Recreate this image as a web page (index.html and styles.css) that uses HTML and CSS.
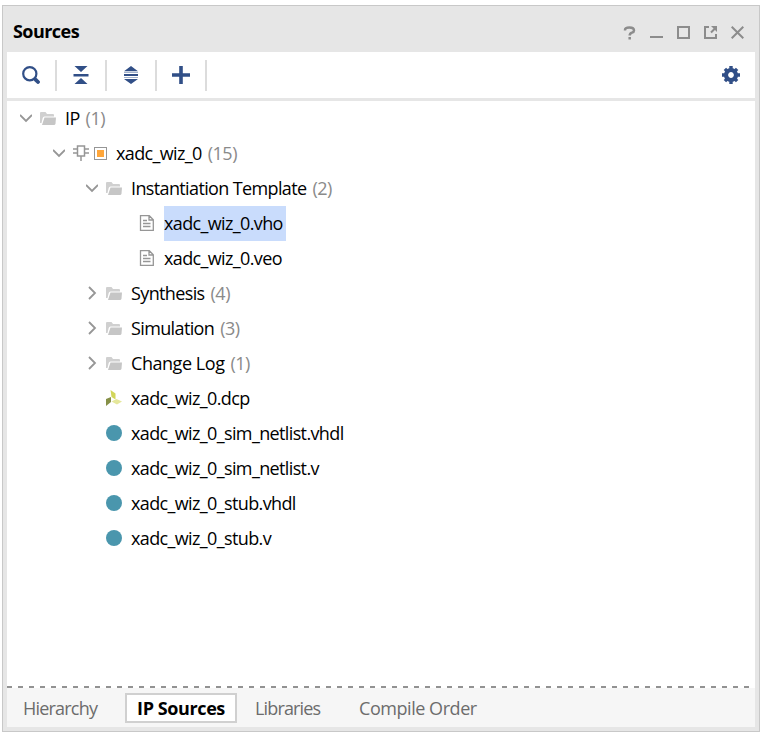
FILE: index.html
```html
<!DOCTYPE html>
<html lang="en">
<head>
<meta charset="utf-8">
<title>Sources</title>
<link rel="stylesheet" href="styles.css">
</head>
<body>
<svg width="0" height="0" class="defs">
  <symbol id="down" viewBox="0 0 12 16"><path d="M0 5l6 6 6-6" fill="none" stroke="#969696" stroke-width="1.800"/></symbol>
  <symbol id="right" viewBox="0 0 12 16"><path d="M3 2l6 6-6 6" fill="none" stroke="#969696" stroke-width="1.800"/></symbol>
  <symbol id="folder" viewBox="0 0 16 16"><path d="M0 13V3Q0 2 1 2h4.500L7 4h6q1 0 1 1v1.500H4.500Q3 6.500 2.700 8L1.500 13z" fill="#d0d0d0"/><path d="M4.500 7.500H16l-.5 6q-.2 1.500-1.500 1.500H2z" fill="#c6c6c6"/></symbol>
  <symbol id="doc" viewBox="0 0 16 16"><path d="M1.500.700h8.800l4 4v10.600H1.500zM10 .7v4.300h4.300M4 5.500h4M4 8.500h7.500M4 11.500h7.500" fill="none" stroke="#969696" stroke-width="1.300"/></symbol>
</svg>
<main class="panel">
  <header class="titlebar">
    <h1>Sources</h1>
    <div class="controls">
      <svg width="13" height="14" viewBox="0 0 13 14"><path d="M2 4.500V4Q2 1.500 6.500 1.500T11 4.500Q11 6 9 6.600 6.700 7.300 6.700 9.500M6.700 11v2.500" fill="none" stroke="#8c8c8c" stroke-width="2.500"/></svg>
      <svg width="13" height="14" viewBox="0 0 13 14"><path d="M0 11h13" stroke="#8c8c8c" stroke-width="2"/></svg>
      <svg width="13" height="14" viewBox="0 0 13 14"><path d="M1 1h11v11H1z" fill="none" stroke="#8c8c8c" stroke-width="2"/></svg>
      <svg width="13" height="14" viewBox="0 0 13 14"><path d="M5 1H1v11h11V8M7 6.500l4-4" fill="none" stroke="#8c8c8c" stroke-width="2"/><path d="M7 0h6v6z" fill="#8c8c8c"/></svg>
      <svg width="13" height="14" viewBox="0 0 13 14"><path d="M.7.700l11.600 11.600M12.300.700L.7 12.300" stroke="#8c8c8c" stroke-width="2"/></svg>
    </div>
  </header>
  <nav class="toolbar">
    <span class="tool"><svg width="18" height="18" viewBox="0 0 18 18"><circle cx="7.800" cy="7.700" r="6.600" fill="none" stroke="#314f87" stroke-width="2.200"/><path d="M13.800 13.800l2.200 2.200" stroke="#314f87" stroke-width="3.800" stroke-linecap="round"/></svg></span>
    <span class="tool"><svg width="18" height="18" viewBox="0 0 18 18"><path d="M2.500 0h13L9 6zM1.500 8h15v2.400h-15zM2.500 18h13L9 12z" fill="#314f87"/></svg></span>
    <span class="tool"><svg width="18" height="18" viewBox="0 0 18 18"><path d="M9 0l7 5.300H2zM2 8h14v2H2zM2 13h14L9 18z" fill="#314f87"/><path d="M2 6h14v1H2zM2 11h14v1H2z" fill="#a5b3cc"/></svg></span>
    <span class="tool"><svg width="18" height="18" viewBox="0 0 18 18"><path d="M9 0v18M0 9h18" stroke="#314f87" stroke-width="3.600"/></svg></span>
    <svg class="gear" width="18" height="18" viewBox="-9 -9 18 18"><circle r="5" fill="none" stroke="#314f87" stroke-width="4.200"/><path d="M0-9v3M0 9V6M-9 0h3M9 0H6M-6.100-6.100l2 2M6.100 6.100l-2-2M6.100-6.100l-2 2M-6.100 6.100l2-2" stroke="#314f87" stroke-width="3.400"/></svg>
  </nav>
  <section class="tree">
    <div class="row l0"><svg class="arrow"><use href="#down"/></svg><svg class="icon"><use href="#folder"/></svg><span class="label">IP</span><span class="count">(1)</span></div>
    <div class="row l1"><svg class="arrow"><use href="#down"/></svg><svg class="icon chip" viewBox="0 0 16 16"><path d="M4.500 1h7v10h-7zM0 4h4.500M0 8h4.500M11.500 4H16M11.500 8H16M8 11v5" fill="none" stroke="#969696" stroke-width="1.500"/></svg><i class="state"></i><span class="label">xadc_wiz_0</span><span class="count">(15)</span></div>
    <div class="row l2"><svg class="arrow"><use href="#down"/></svg><svg class="icon"><use href="#folder"/></svg><span class="label">Instantiation Template</span><span class="count">(2)</span></div>
    <div class="row l3"><svg class="icon"><use href="#doc"/></svg><span class="label selected">xadc_wiz_0.vho</span></div>
    <div class="row l3"><svg class="icon"><use href="#doc"/></svg><span class="label">xadc_wiz_0.veo</span></div>
    <div class="row l2"><svg class="arrow"><use href="#right"/></svg><svg class="icon"><use href="#folder"/></svg><span class="label">Synthesis</span><span class="count">(4)</span></div>
    <div class="row l2"><svg class="arrow"><use href="#right"/></svg><svg class="icon"><use href="#folder"/></svg><span class="label">Simulation</span><span class="count">(3)</span></div>
    <div class="row l2"><svg class="arrow"><use href="#right"/></svg><svg class="icon"><use href="#folder"/></svg><span class="label loose">Change Log</span><span class="count">(1)</span></div>
    <div class="row file"><svg class="icon" viewBox="0 0 16 16"><path d="M4.500 0l5 3.500v6L5.500 7z" fill="#d2d65a"/><path d="M0 9l5-2v5l-5 4z" fill="#869047"/><path d="M5.500 11.500l5-2.500 5.500 2.500-5 3z" fill="#e5e79b"/></svg><span class="label">xadc_wiz_0.dcp</span></div>
    <div class="row file"><i class="dot"></i><span class="label">xadc_wiz_0_sim_netlist.vhdl</span></div>
    <div class="row file"><i class="dot"></i><span class="label">xadc_wiz_0_sim_netlist.v</span></div>
    <div class="row file"><i class="dot"></i><span class="label">xadc_wiz_0_stub.vhdl</span></div>
    <div class="row file"><i class="dot"></i><span class="label">xadc_wiz_0_stub.v</span></div>
  </section>
  <div class="dashes"></div>
  <footer class="tabs">
    <span class="tab hierarchy">Hierarchy</span><span class="tab active">IP Sources</span><span class="tab libraries">Libraries</span><span class="tab loose">Compile Order</span>
  </footer>
</main>
</body>
</html>
```
FILE: styles.css
```css
* { box-sizing: border-box; }
body { margin: 0; background: #fff; font: 18px/35px "Open Sans", "Noto Sans", sans-serif; letter-spacing: -0.63px; color: #000; overflow: hidden; }
svg { display: block; flex: none; }
.defs { display: none; }
.panel { width: 758px; height: 727px; margin: 5px 0 0 2px; border: 1px solid #c8c8c8; background: #e6e6e6; padding: 0 4px 4px; display: flex; flex-direction: column; }
.titlebar { height: 46px; display: flex; justify-content: space-between; padding: 0 11px 0 6px; }
h1 { margin: 8px 0 0; font-size: 18px; line-height: 35px; font-weight: 700; letter-spacing: -0.55px; }
.controls { display: flex; gap: 14px; padding-top: 20px; }
.toolbar { height: 46px; background: #fff; display: flex; align-items: center; }
.tool { width: 50px; height: 31px; border-right: 2px solid #dcdcdc; display: flex; align-items: center; justify-content: center; }
.tool svg { margin-bottom: 1px; }
.gear { margin: 0 15px 0 auto; }
.tree { flex: 1; margin-top: 3px; background: #fff; }
.row { height: 35px; display: flex; align-items: center; white-space: pre; }
.l0 { padding-left: 13px; }
.l1 { padding-left: 46px; }
.l2 { padding-left: 79px; }
.l3 { padding-left: 132px; }
.file { padding-left: 99px; }
.arrow { width: 12px; height: 16px; margin: 0 8px 1px 0; overflow: visible; }
.icon { width: 16px; height: 16px; margin: 0 9px 1px 0; }
.chip { margin-right: 5px; }
.state { width: 13px; height: 13px; border: 1px solid #969696; background: #ffa63a; box-shadow: inset 0 0 0 2px #fff; margin-right: 9px; }
.dot { width: 16px; height: 16px; border-radius: 50%; background: #4a96ad; margin: 0 9px 1px 0; }
.label { height: 35px; }
.selected { width: 122px; background: #c9dcfc; }
.loose { letter-spacing: -0.45px; }
.count { color: #8a8a8a; margin-left: 6px; letter-spacing: -0.5px; }
.dashes { height: 2px; background: repeating-linear-gradient(90deg, #929292 0 5px, #fff 5px 11px); }
.tabs { height: 39px; background: #f6f6f6; display: flex; align-items: center; padding-left: 16px; color: #6c6c6c; line-height: 26px; white-space: pre; }
.hierarchy { width: 102px; letter-spacing: -0.8px; }
.active { width: 112px; height: 30px; border: 2px solid #d0d0d0; background: #fff; color: #000; font-weight: 700; text-align: center; margin-right: 18px; letter-spacing: -0.4px; }
.libraries { width: 104px; letter-spacing: -0.85px; }
```
